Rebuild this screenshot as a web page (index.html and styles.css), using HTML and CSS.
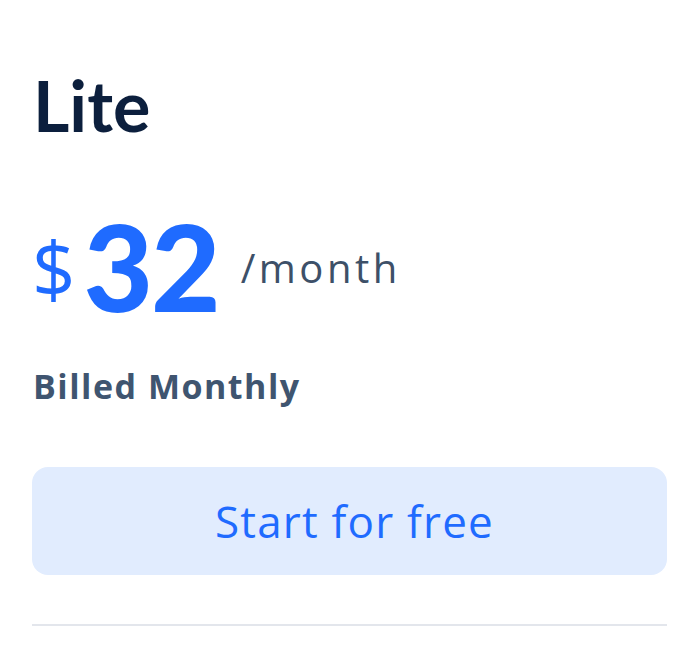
FILE: index.html
```html
<!DOCTYPE html>
<html lang="en">
<head>
<meta charset="utf-8">
<title>Lite plan</title>
<link rel="stylesheet" href="styles.css">
</head>
<body>
<section class="card">
  <h1 class="plan-name">Lite</h1>
  <div class="price-row">
    <span class="currency">$</span>
    <span class="amount">32</span>
    <span class="period">/month</span>
  </div>
  <p class="billing">Billed Monthly</p>
  <button class="cta" type="button">Start for free</button>
  <hr class="divider">
</section>
</body>
</html>
```

FILE: styles.css
```css
html, body {
  margin: 0;
  padding: 0;
  background: #ffffff;
}

body {
  font-family: "Open Sans", "Noto Sans", "Liberation Sans", sans-serif;
  width: 700px;
  height: 648px;
  overflow: hidden;
}

.card {
  padding: 70px 33px 0 32px;
  display: flex;
  flex-direction: column;
}

.plan-name {
  margin: 0;
  padding-left: 1px;
  font-family: "Lato", "Open Sans", sans-serif;
  font-size: 70px;
  line-height: 70px;
  font-weight: 700;
  color: #0c1f3d;
}

.price-row {
  margin-top: 66px;
  height: 120px;
  display: flex;
  align-items: center;
}

.currency {
  font-size: 76px;
  line-height: 1;
  font-weight: 400;
  color: #1f6bff;
  margin-right: 8px;
  margin-top: 4px;
}

.amount {
  font-family: "Lato", "Open Sans", sans-serif;
  font-size: 120px;
  line-height: 1;
  font-weight: 900;
  color: #1f6bff;
  letter-spacing: -2px;
  margin-right: 22px;
}

.period {
  font-size: 40px;
  line-height: 1;
  font-weight: 400;
  color: #3d5068;
  letter-spacing: 3.5px;
  margin-top: 4px;
}

.billing {
  margin: 40px 0 0;
  padding-left: 1px;
  font-size: 34px;
  line-height: 40px;
  font-weight: 700;
  color: #3f5570;
  letter-spacing: 1.5px;
}

.cta {
  margin-top: 61px;
  height: 108px;
  padding: 0 0 0 10px;
  border: 0;
  border-radius: 16px;
  background: #e1ecfe;
  color: #1f6bff;
  font-family: inherit;
  font-size: 44px;
  font-weight: 400;
  letter-spacing: 1.2px;
  cursor: pointer;
}

.divider {
  margin: 49px 0 0;
  border: 0;
  height: 2px;
  background: #e3e6ec;
}
```
